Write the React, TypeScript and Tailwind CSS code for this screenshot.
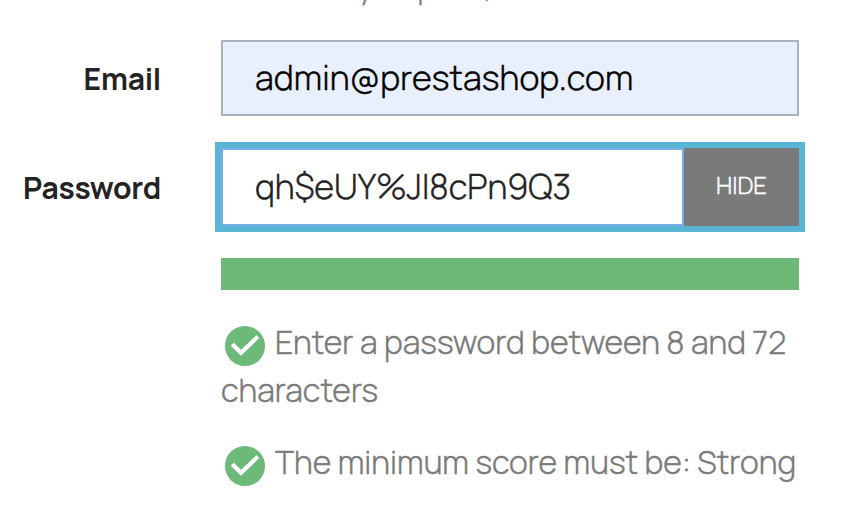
import React from 'react';

function CheckIcon() {
  return (
    <svg viewBox="0 0 40 40" className="mr-[10px] ml-1 inline-block h-10 w-10 align-[-12px]" aria-hidden="true">
      <circle cx="20" cy="20" r="20" fill="#6cb978" />
      <path d="M7.3 18.2 16 26.8 32.8 10.6" fill="none" stroke="#fff" strokeWidth="4.2" />
    </svg>
  );
}

export default function App() {
  return (
    <main className="h-[526px] w-[862px] overflow-hidden bg-white font-['Manrope','Inter',sans-serif] text-[#232323]">
      <p className="-mt-[37px] ml-[221px] h-[48px] whitespace-nowrap text-[30px] leading-[48px] font-light text-[#7a7a7a] [-webkit-text-stroke:0.4px]">followed by a space, are allowed.</p>
      <div className="mt-[29px] flex h-[76px] w-[799px] items-center">
        <label className="w-[161px] text-right text-[30px] font-bold tracking-[-0.25px]" htmlFor="email">Email</label>
        <div id="email" className="ml-[60px] flex h-[76px] w-[578px] items-center border-2 border-[#acb1bf] bg-[#e8effd] pb-0.5 pl-8 text-[34px] font-light tracking-[0.12px] text-black [-webkit-text-stroke:0.4px]">admin@prestashop.com</div>
      </div>
      <div className="mt-8 flex h-[78px] w-[799px] items-center">
        <label className="w-[161px] text-right text-[30px] font-bold tracking-[-0.25px]" htmlFor="password">Password</label>
        <div className="ml-[60px] flex h-[78px] w-[578px] outline-6 outline-[#59b5d3]">
          <div id="password" className="flex w-[463px] items-center border-2 border-[#7aade8] bg-white pb-0.5 pl-8 text-[34px] font-light [-webkit-text-stroke:0.4px]">qh$eUY%JI8cPn9Q3</div>
          <button className="w-[115px] bg-[#7a7a7a] pb-1 text-[24px] font-light text-white [-webkit-text-stroke:0.4px]">HIDE</button>
        </div>
      </div>
      <div className="mt-8 ml-[221px] h-8 w-[578px] bg-[#6cb978]" />
      <p className="mt-[28px] ml-[221px] w-[590px] text-[32px] leading-[48px] font-light tracking-[0.03px] text-[#7a7a7a] [-webkit-text-stroke:0.4px]">
        <CheckIcon />Enter a password between 8 and 72 characters
      </p>
      <p className="mt-6 ml-[221px] w-[590px] text-[32px] leading-[48px] font-light tracking-[0.03px] text-[#7a7a7a] [-webkit-text-stroke:0.4px]">
        <CheckIcon />The minimum score must be: Strong
      </p>
    </main>
  );
}
